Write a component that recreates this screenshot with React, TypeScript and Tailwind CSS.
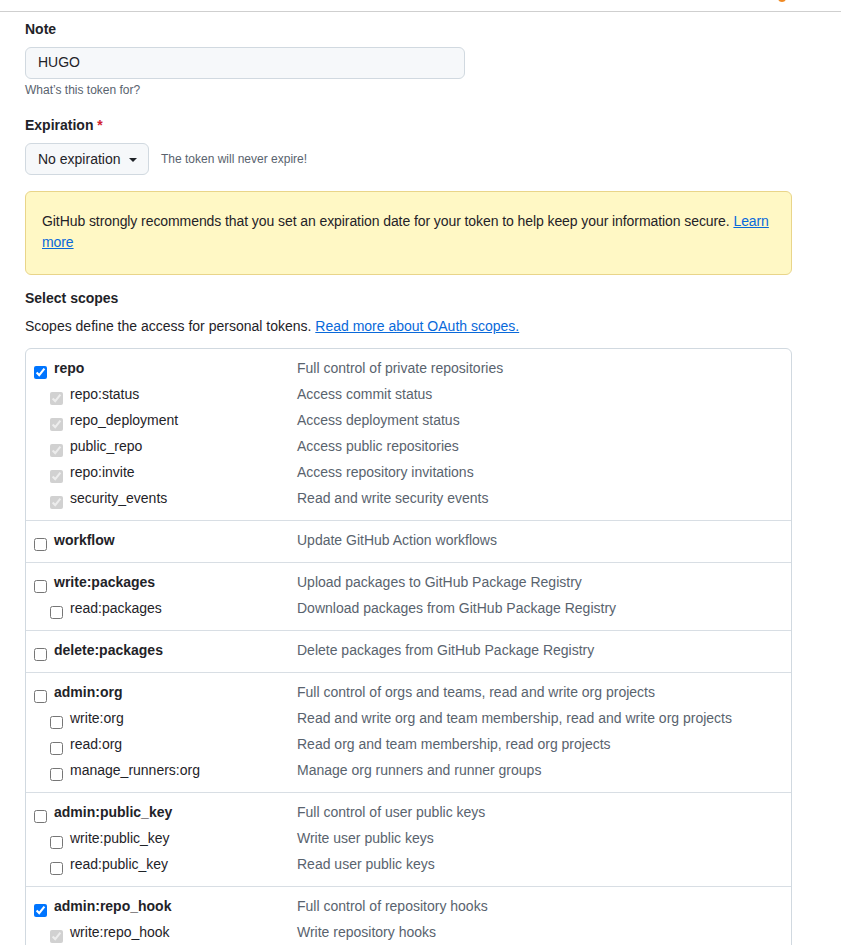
type Scope = {
  name: string;
  desc: string;
  checked?: boolean;
  children?: [string, string][];
};

const scopes: Scope[] = [
  {
    name: 'repo',
    desc: 'Full control of private repositories',
    checked: true,
    children: [
      ['repo:status', 'Access commit status'],
      ['repo_deployment', 'Access deployment status'],
      ['public_repo', 'Access public repositories'],
      ['repo:invite', 'Access repository invitations'],
      ['security_events', 'Read and write security events'],
    ],
  },
  { name: 'workflow', desc: 'Update GitHub Action workflows' },
  {
    name: 'write:packages',
    desc: 'Upload packages to GitHub Package Registry',
    children: [['read:packages', 'Download packages from GitHub Package Registry']],
  },
  { name: 'delete:packages', desc: 'Delete packages from GitHub Package Registry' },
  {
    name: 'admin:org',
    desc: 'Full control of orgs and teams, read and write org projects',
    children: [
      ['write:org', 'Read and write org and team membership, read and write org projects'],
      ['read:org', 'Read org and team membership, read org projects'],
      ['manage_runners:org', 'Manage org runners and runner groups'],
    ],
  },
  {
    name: 'admin:public_key',
    desc: 'Full control of user public keys',
    children: [
      ['write:public_key', 'Write user public keys'],
      ['read:public_key', 'Read user public keys'],
    ],
  },
  {
    name: 'admin:repo_hook',
    desc: 'Full control of repository hooks',
    checked: true,
    children: [
      ['write:repo_hook', 'Write repository hooks'],
      ['read:repo_hook', 'Read repository hooks'],
    ],
  },
  { name: 'admin:org_hook', desc: 'Full control of organization hooks' },
];

const Row = ({ name, desc, top, checked, disabled }: { name: string; desc: string; top?: boolean; checked?: boolean; disabled?: boolean }) => (
  <div className="flex h-[26px] leading-[26px]">
    <div className={`flex w-[271px] shrink-0 items-start gap-[7px] ${top ? 'pl-2' : 'pl-6'}`}>
      <input type="checkbox" readOnly checked={!!checked} disabled={disabled} className="mt-[11px] h-[13px] w-[13px] shrink-0" />
      <span className={top ? 'font-bold text-[#1f2328]' : 'text-[#1f2328]'}>{name}</span>
    </div>
    <div className="text-[#59636e] whitespace-nowrap">{desc}</div>
  </div>
);

export default function App() {
  return (
    <div className="min-h-screen bg-white font-['Liberation_Sans',Arial,sans-serif] text-sm text-[#1f2328]">
      {/* cut-off bookmark bar */}
      <div className="h-[12px] border-b border-[#cfcfcf] relative overflow-hidden">
        <span className="absolute left-[778px] -top-[6px] h-2 w-2 rounded-full bg-[#f08a24]" />
      </div>

      <div className="w-[767px] ml-[25px] pt-[7px]">
        {/* Note */}
        <label className="block font-bold leading-5">Note</label>
        <div className="mt-2 flex h-8 w-[440px] items-center rounded-md border border-[#d1d9e0] bg-[#f6f8fa] px-3 pb-[2px]">
          HUGO
        </div>
        <p className="mt-[2px] text-xs leading-[18px] text-[#59636e]">What’s this token for?</p>

        {/* Expiration */}
        <label className="mt-4 block font-bold leading-5">
          Expiration <span className="text-[#d1242f]">*</span>
        </label>
        <div className="mt-2 flex items-center gap-3">
          <button className="flex h-8 w-[124px] items-center gap-2 rounded-md border border-[#d1d9e0] bg-[#f6f8fa] pl-3 pb-px text-[#1f2328]">
            No expiration
            <span className="mt-[2px] border-x-4 border-t-4 border-x-transparent border-t-[#1f2328]" />
          </button>
          <span className="text-xs text-[#59636e]">The token will never expire!</span>
        </div>

        {/* Warning */}
        <div className="mt-4 rounded-md border border-[#e9d58a] bg-[#fff8c5] px-4 pt-[19px] pb-[21px] leading-[21px] tracking-[-0.08px]">
          GitHub strongly recommends that you set an expiration date for your token to help keep your information secure.{' '}
          <a href="#" className="text-[#0969da] underline">
            Learn more
          </a>
        </div>

        {/* Scopes */}
        <h3 className="mt-[13px] font-bold leading-5">Select scopes</h3>
        <p className="mt-2 leading-5">
          Scopes define the access for personal tokens.{' '}
          <a href="#" className="text-[#0969da] underline">
            Read more about OAuth scopes.
          </a>
        </p>

        <div className="mt-3 rounded-md border border-[#d1d9e0]">
          {scopes.map((s, i) => (
            <div key={s.name} className={`pt-[6px] pb-[9px] ${i > 0 ? 'border-t border-[#d8dee4]' : ''}`}>
              <Row name={s.name} desc={s.desc} top checked={s.checked} />
              {s.children?.map(([n, d]) => (
                <Row key={n} name={n} desc={d} checked={s.checked} disabled={s.checked} />
              ))}
            </div>
          ))}
        </div>
      </div>
    </div>
  );
}
